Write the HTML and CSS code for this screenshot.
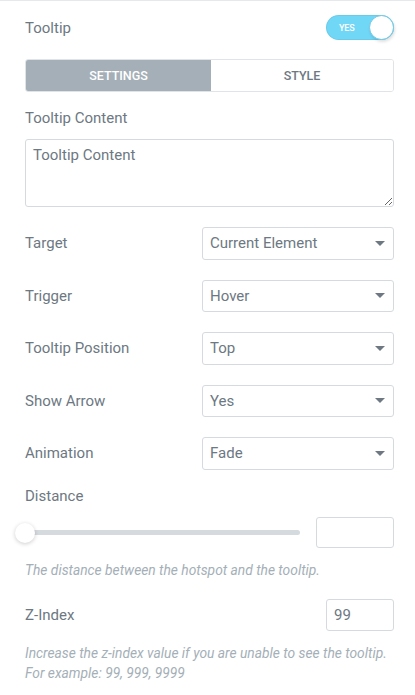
FILE: index.html
```html
<!DOCTYPE html>
<html>
<head>
<meta charset="utf-8">
<link rel="stylesheet" href="styles.css">
</head>
<body>
<div class="panel">
  <div class="row toggle-row">
    <span class="label">Tooltip</span>
    <span class="switch"><span class="switch-text">YES</span><span class="switch-knob"></span></span>
  </div>

  <div class="tabs">
    <div class="tab active">SETTINGS</div>
    <div class="tab">STYLE</div>
  </div>

  <div class="label block-label">Tooltip Content</div>
  <textarea class="textarea">Tooltip Content</textarea>

  <div class="selects">
    <div class="row select-row">
      <span class="label">Target</span>
      <div class="select"><span>Current Element</span><span class="caret"></span></div>
    </div>
    <div class="row select-row">
      <span class="label">Trigger</span>
      <div class="select"><span>Hover</span><span class="caret"></span></div>
    </div>
    <div class="row select-row">
      <span class="label">Tooltip Position</span>
      <div class="select"><span>Top</span><span class="caret"></span></div>
    </div>
    <div class="row select-row">
      <span class="label">Show Arrow</span>
      <div class="select"><span>Yes</span><span class="caret"></span></div>
    </div>
    <div class="row select-row">
      <span class="label">Animation</span>
      <div class="select"><span>Fade</span><span class="caret"></span></div>
    </div>
  </div>

  <div class="label block-label distance-label">Distance</div>
  <div class="row slider-row">
    <div class="slider"><span class="track"></span><span class="knob"></span></div>
    <div class="num-input wide"></div>
  </div>
  <div class="desc desc-distance">The distance between the hotspot and the tooltip.</div>

  <div class="row zindex-row">
    <span class="label">Z-Index</span>
    <div class="num-input">99</div>
  </div>
  <div class="desc desc-z">Increase the z-index value if you are unable to see the tooltip. For example: 99, 999, 9999</div>
</div>
</body>
</html>
```

FILE: styles.css
```css
* { box-sizing: border-box; }
html, body { margin: 0; padding: 0; background: #fff; }
body {
  font-family: Roboto, "Liberation Sans", sans-serif;
  color: #6d7882;
  width: 415px;
  height: 695px;
  overflow: hidden;
}
.panel {
  border-top: 1px solid #e6e9ec;
  padding: 14px 21px 0 25px;
}
.row {
  display: flex;
  align-items: center;
  justify-content: space-between;
}
.label {
  font-size: 15px;
  line-height: 20px;
  color: #6d7882;
}
.toggle-row { height: 25px; }
.switch {
  position: relative;
  width: 68px;
  height: 25px;
  border-radius: 13px;
  background: #71d7f7;
  box-shadow: inset 0 0 0 1px rgba(0,0,0,0.06);
  display: flex;
  align-items: center;
}
.switch-text {
  color: #fff;
  font-size: 9px;
  font-weight: 500;
  margin-left: 13px;
  letter-spacing: -0.2px;
}
.switch-knob {
  position: absolute;
  right: 0;
  top: 0;
  width: 25px;
  height: 25px;
  border-radius: 50%;
  background: #fff;
  border: 1px solid #6fc8e6;
  box-shadow: 1px 2px 3px rgba(0,0,0,0.12);
}
.tabs {
  margin-top: 19px;
  height: 33px;
  display: flex;
  border: 1px solid #e0e4e8;
  border-radius: 3px;
  overflow: hidden;
}
.tab {
  flex: 1;
  display: flex;
  align-items: center;
  justify-content: center;
  font-size: 12.5px;
  font-weight: 500;
  color: #6d7882;
  background: #fff;
}
.tab.active {
  background: #a4afb7;
  color: #fff;
  flex: 0 0 185px;
}
.block-label {
  margin-top: 16px;
}
.textarea {
  display: block;
  margin-top: 11px;
  width: 100%;
  height: 68px;
  border: 1px solid #d5dadf;
  border-radius: 3px;
  padding: 5px 7px;
  font-family: Roboto, "Liberation Sans", sans-serif;
  font-size: 15px;
  line-height: 20px;
  color: #6d7882;
  resize: vertical;
  outline: none;
}
.selects {
  margin-top: 20px;
  display: flex;
  flex-direction: column;
  gap: 20px;
}
.select-row { height: 32.5px; }
.select {
  width: 192px;
  height: 32.5px;
  border: 1px solid #d5dadf;
  border-radius: 3px;
  display: flex;
  align-items: center;
  justify-content: space-between;
  padding: 0 8px 0 7px;
  font-size: 15px;
  color: #6d7882;
}
.caret {
  width: 0;
  height: 0;
  border-left: 5px solid transparent;
  border-right: 5px solid transparent;
  border-top: 5px solid #6d7882;
}
.distance-label { margin-top: 16.5px; }
.slider-row {
  margin-top: 11px;
  height: 31px;
}
.slider {
  position: relative;
  width: 285px;
  height: 31px;
  margin-left: -10px;
}
.track {
  position: absolute;
  left: 10px;
  right: 0;
  top: 13px;
  height: 5px;
  border-radius: 3px;
  background: #d5dadf;
}
.knob {
  position: absolute;
  left: 0;
  top: 5.5px;
  width: 20px;
  height: 20px;
  border-radius: 50%;
  background: #fff;
  box-shadow: 0 1px 4px rgba(0,0,0,0.2);
}
.num-input {
  width: 68px;
  height: 32px;
  border: 1px solid #d5dadf;
  border-radius: 3px;
  display: flex;
  align-items: center;
  padding-left: 7px;
  font-size: 15px;
  color: #6d7882;
}
.num-input.wide { width: 78px; height: 31px; }
.desc {
  font-size: 13.8px;
  font-style: italic;
  line-height: 20px;
  color: #a4afb7;
}
.desc-distance { margin-top: 12px; }
.zindex-row {
  margin-top: 19px;
  height: 32px;
}
.desc-z { margin-top: 12px; }
```
